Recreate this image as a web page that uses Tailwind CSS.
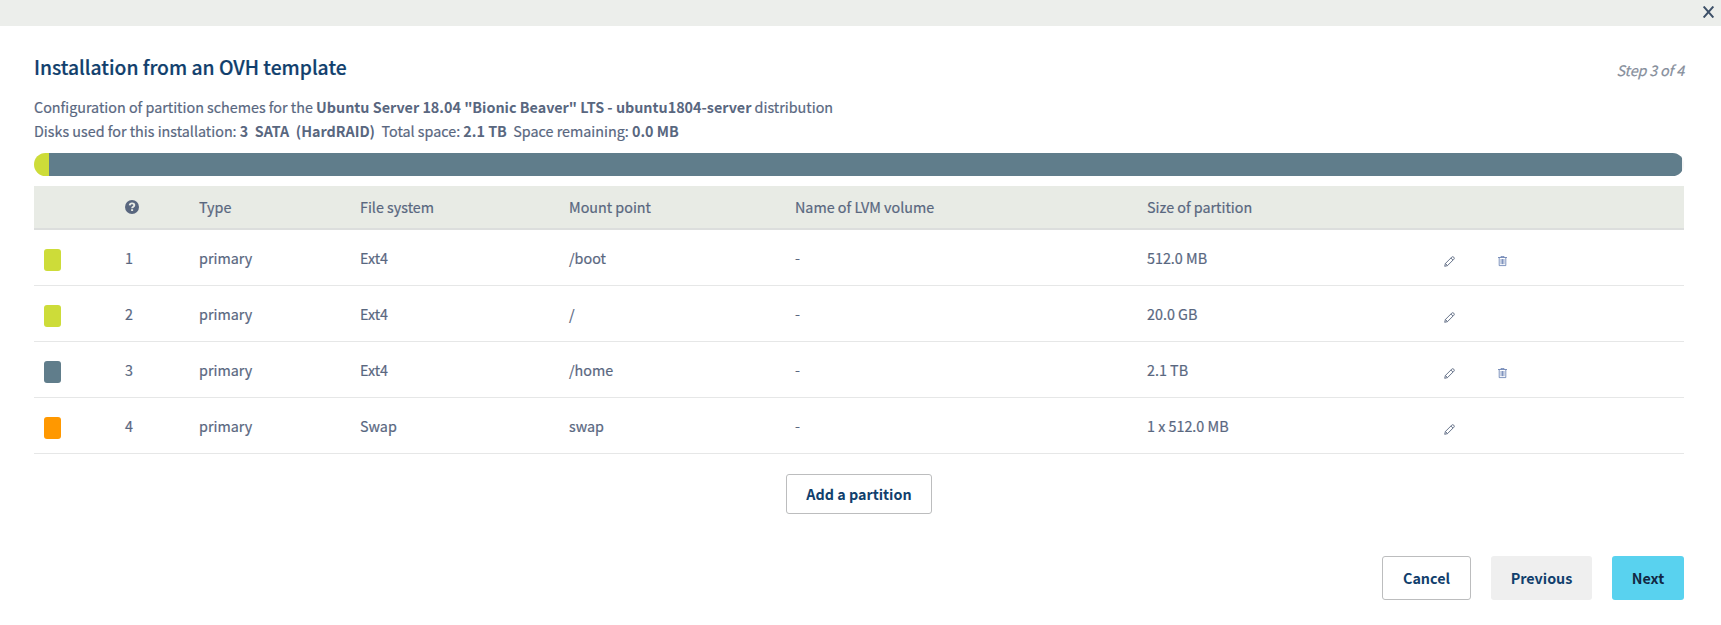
<!DOCTYPE html>
<html lang="en">
<head>
<meta charset="utf-8">
<title>Installation from an OVH template</title>
<script src="https://cdn.jsdelivr.net/npm/@tailwindcss/browser@4"></script>
</head>
<body class="h-[625px] w-[1721px] overflow-hidden bg-white font-['Noto_Sans_CJK_SC','Noto_Sans',sans-serif] text-[14.34px] leading-6 text-[#59677f] [-webkit-text-stroke:0.2px]">
<header class="flex h-[26px] items-start justify-end bg-[#eceeeb] pt-[6px] pr-[7px]">
  <svg class="h-3 w-[11px]" viewBox="0 0 11 12" fill="none" stroke="#3d5068" stroke-width="1.900"><path d="M.7.5 10.300 11.500M10.300.5.7 11.500"/></svg>
</header>
<main class="pt-[26px] pr-[37px] pl-[34px] whitespace-nowrap">
  <div class="flex h-[43px] justify-between">
    <h1 class="pt-[3px] text-[19.3px] leading-6 font-medium text-[#113f6d]">Installation from an OVH template</h1>
    <p class="pt-[6px] tracking-[-0.15px] text-[#868e9b] italic">Step 3 of 4</p>
  </div>
  <p class="h-6">Configuration of partition schemes for the <b class="[-webkit-text-stroke:0]">Ubuntu Server 18.04 "Bionic Beaver" LTS - ubuntu1804-server</b> distribution</p>
  <p class="h-6">Disks used for this installation: <b class="[-webkit-text-stroke:0]">3 &nbsp;SATA &nbsp;(HardRAID)</b> &nbsp;Total space: <b class="[-webkit-text-stroke:0]">2.1 TB</b> &nbsp;Space remaining: <b class="[-webkit-text-stroke:0]">0.0 MB</b></p>
  <div class="mt-[10px] flex h-[23px] overflow-hidden rounded-[12px] bg-[#f5f5f5]">
    <div class="w-[15px] bg-[#cddc39]"></div><div class="w-[1633px] bg-[#607d8b]"></div>
  </div>
  <table class="mt-[10px] w-[1650px] table-fixed border-separate border-spacing-0 text-left">
    <colgroup><col class="w-[81px]"><col class="w-[74px]"><col class="w-[161px]"><col class="w-[209px]"><col class="w-[226px]"><col class="w-[352px]"><col class="w-[296px]"><col class="w-[54px]"><col class="w-[197px]"></colgroup>
    <thead>
      <tr class="bg-[#e8ebe5] [&>th]:h-[44px] [&>th]:border-b-2 [&>th]:border-[#dcdedd] [&>th]:px-[10px] [&>th]:py-0 [&>th]:font-normal">
        <th></th>
        <th><svg class="-ml-[0.5px] h-[14px] w-[14px]" viewBox="0 0 14 14"><circle cx="7" cy="7" r="7" fill="#59677f"/><path d="M4.700 5.300C4.900 3.900 5.800 3.400 7 3.400c1.400 0 2.300.7 2.300 1.800 0 1.500-2.200 1.500-2.200 3" fill="none" stroke="#e8ebe5" stroke-width="1.900"/><path d="M6.100 9.200h2v1.800h-2z" fill="#e8ebe5"/></svg></th>
        <th>Type</th><th>File system</th><th>Mount point</th><th>Name of LVM volume</th><th>Size of partition</th><th></th><th></th>
      </tr>
    </thead>
    <tbody id="rows"></tbody>
  </table>
  <div class="flex justify-center pt-5">
    <button class="h-10 w-[146px] rounded-[3px] border border-[#bcbdbe] font-bold text-[#113f6d] [-webkit-text-stroke:0]">Add a partition</button>
  </div>
  <div class="mt-[42px] flex justify-end gap-5 font-bold text-[#113f6d] [-webkit-text-stroke:0]">
    <button class="h-[44px] w-[89px] rounded-[3px] border border-[#bcbdbe]">Cancel</button>
    <button class="h-[44px] w-[101px] rounded-[3px] bg-[#efefef]">Previous</button>
    <button class="h-[44px] w-[72px] rounded-[3px] bg-[#59d2ef] text-[#122844]">Next</button>
  </div>
</main>
<template id="row">
  <tr class="[&>td]:h-[56px] [&>td]:border-b [&>td]:border-[#e6e7e7] [&>td]:px-[10px] [&>td]:pt-px [&>td]:pb-0">
    <td><div class="mt-[4px] h-[22px] w-[17px] rounded-[3px]"></div></td>
    <td></td><td>primary</td><td></td><td></td><td>-</td><td></td>
    <td><svg class="mt-[7px] ml-px h-[11px] w-[11px]" viewBox="0 0 11 11" fill="none" stroke="#59677f" stroke-width=".9"><path d="M.7 10.300 1.400 7.500 7.700 1.200Q8.700.2 9.800 1.200T9.800 3.300L3.500 9.600ZM6.900 2 9 4.100M1.400 7.500 3.500 9.600"/></svg></td>
    <td><svg class="mt-[7px] ml-px h-[11px] w-[9px]" viewBox="0 0 9 11" fill="none" stroke="#6079ad" stroke-width=".8"><path d="M0 1.500H9M3 1.400V.4H6V1.400M1.200 1.600V9.600H7.800V1.600M3.100 3V8.200M4.500 3V8.200M5.900 3V8.200"/></svg></td>
  </tr>
</template>
<script>
const parts = [
  ['#cddc39', '1', 'Ext4', '/boot', '512.0 MB', true],
  ['#cddc39', '2', 'Ext4', '/', '20.0 GB', false],
  ['#607d8b', '3', 'Ext4', '/home', '2.1 TB', true],
  ['#ff9800', '4', 'Swap', 'swap', '1 x 512.0 MB', false]
];
for (const [color, n, fs, mount, size, removable] of parts) {
  const tr = document.getElementById('row').content.cloneNode(true).firstElementChild, c = tr.cells;
  c[0].firstElementChild.style.backgroundColor = color;
  c[1].textContent = n; c[3].textContent = fs; c[4].textContent = mount; c[6].textContent = size;
  if (!removable) c[8].textContent = '';
  document.getElementById('rows').append(tr);
}
</script>
</body>
</html>
